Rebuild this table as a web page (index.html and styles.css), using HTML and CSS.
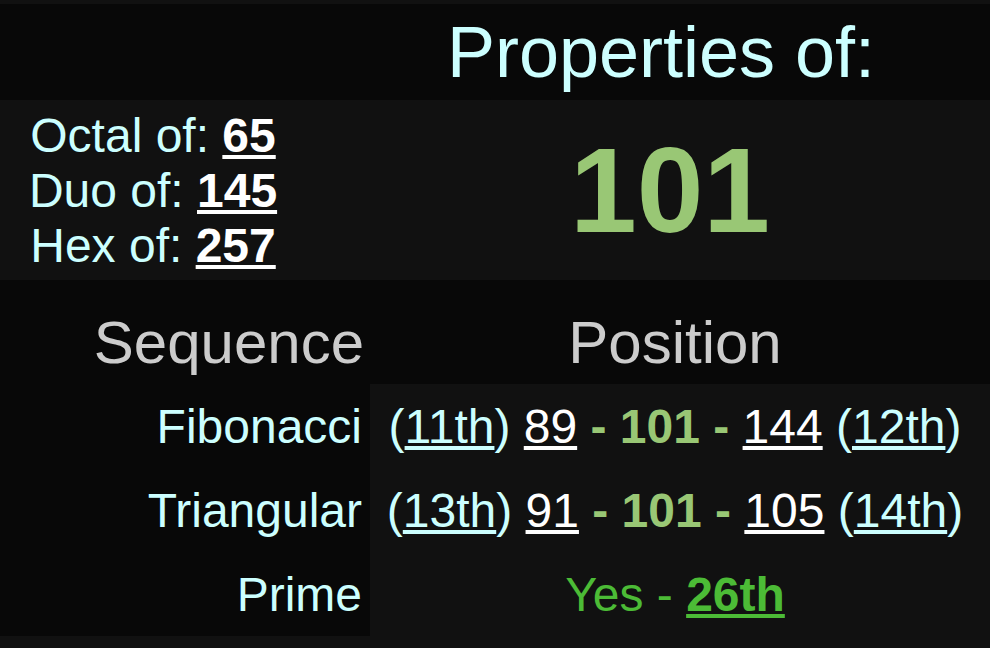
FILE: index.html
```html
<!DOCTYPE html>
<html lang="en">
<head>
<meta charset="utf-8">
<title>Properties of 101</title>
<link rel="stylesheet" href="styles.css">
</head>
<body>
<div class="page">
  <header class="title-row">
    <h1 class="title">Properties of:</h1>
  </header>
  <section class="number-row">
    <div class="bases">
      <div class="base">Octal of: <a class="val" href="#">65</a></div>
      <div class="base">Duo of: <a class="val" href="#">145</a></div>
      <div class="base">Hex of: <a class="val" href="#">257</a></div>
    </div>
    <div class="number">101</div>
  </section>
  <section class="sequences">
    <div class="head head-seq">Sequence</div>
    <div class="head head-pos">Position</div>

    <div class="seq-name">Fibonacci</div>
    <div class="seq-pos"><span class="line">(<a class="ord" href="#">11th</a>) <a class="num" href="#">89</a> <span class="cur">- 101 -</span> <a class="num" href="#">144</a> (<a class="ord" href="#">12th</a>)</span></div>

    <div class="seq-name">Triangular</div>
    <div class="seq-pos"><span class="line">(<a class="ord" href="#">13th</a>) <a class="num" href="#">91</a> <span class="cur">- 101 -</span> <a class="num" href="#">105</a> (<a class="ord" href="#">14th</a>)</span></div>

    <div class="seq-name">Prime</div>
    <div class="seq-pos prime"><span class="line">Yes - <a class="prime-ord" href="#">26th</a></span></div>
  </section>
</div>
</body>
</html>
```
FILE: styles.css
```css
html, body {
  margin: 0;
  padding: 0;
  background: #111111;
}
body {
  font-family: "Liberation Sans", Arial, sans-serif;
  color: #ccffff;
}
.page {
  padding-top: 4px;
  width: 990px;
}
.title-row {
  background: #080808;
  height: 96px;
  display: flex;
  align-items: center;
  justify-content: center;
  padding-left: 332px;
  box-sizing: border-box;
}
.title {
  margin: 0;
  font-size: 72px;
  font-weight: normal;
  line-height: normal;
  color: #ccffff;
  text-align: center;
  flex: 1;
}
.number-row {
  background: #111111;
  height: 180px;
  display: grid;
  grid-template-columns: 306px 1fr;
}
.bases {
  display: flex;
  flex-direction: column;
  justify-content: center;
  align-items: center;
  font-size: 48px;
  line-height: normal;
}
.base {
  white-space: nowrap;
}
.val {
  color: #ffffff;
  font-weight: bold;
  text-decoration: underline;
}
.number {
  display: flex;
  align-items: center;
  justify-content: center;
  padding-left: 44px;
  font-size: 120px;
  font-weight: bold;
  color: #99c775;
  line-height: normal;
}
.sequences {
  background: #080808;
  display: grid;
  grid-template-columns: 370px 1fr;
  grid-template-rows: 104px 84px 84px 84px;
}
.head {
  font-size: 60px;
  color: #cccccc;
  line-height: normal;
  padding-top: 28px;
  box-sizing: border-box;
}
.head-seq {
  text-align: right;
  padding-right: 6px;
}
.head-pos {
  text-align: center;
  padding-right: 10px;
}
.seq-name {
  font-size: 48px;
  line-height: normal;
  padding-right: 8px;
  display: flex;
  align-items: center;
  justify-content: flex-end;
}
.seq-pos {
  background: #111111;
  font-size: 48px;
  line-height: normal;
  display: flex;
  align-items: center;
  justify-content: center;
  padding-right: 10px;
}
.line {
  white-space: nowrap;
}
.ord {
  color: #ccffff;
  text-decoration: underline;
}
.num {
  color: #ffffff;
  text-decoration: underline;
}
.cur {
  color: #99c775;
  font-weight: bold;
}
.prime {
  color: #4cbb36;
}
.prime-ord {
  color: #4cbb36;
  font-weight: bold;
  text-decoration: underline;
}
```
